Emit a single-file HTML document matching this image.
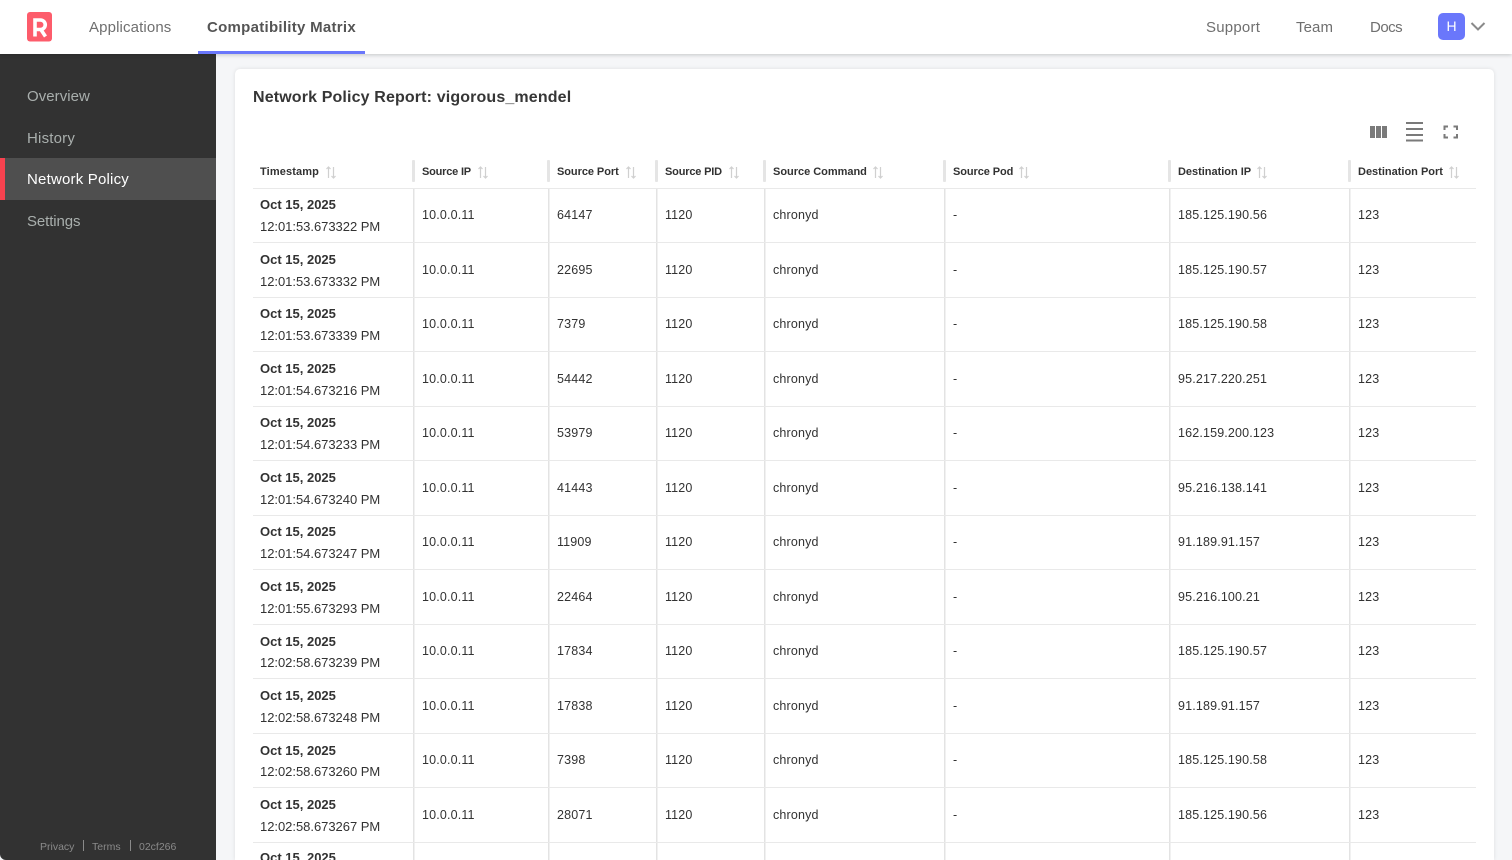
<!DOCTYPE html>
<html><head><meta charset="utf-8">
<style>
*{box-sizing:border-box}
html,body{margin:0;padding:0;width:1512px;height:860px;overflow:hidden;background:#f5f6f8;font-family:"Liberation Sans",sans-serif}
#root{position:relative;width:1512px;height:860px;overflow:hidden;background:#f5f6f8}
.a{position:absolute;white-space:nowrap}
#top{position:absolute;left:0;top:0;width:1512px;height:54px;background:#fff;box-shadow:0 1px 4px rgba(0,0,0,.2);z-index:3}
.nav{font-size:15px;color:#6f6f6f;top:19px;line-height:18px;letter-spacing:.13px}
#side{position:absolute;left:0;top:54px;width:216px;height:806px;background:#323232;border-bottom-left-radius:6px;z-index:2}
.si{font-size:15px;color:#a9afad;left:27px;line-height:18px}
.ft{font-size:10.5px;color:#8a8a8a;top:840px;line-height:14px;letter-spacing:0}
#card{position:absolute;left:235px;top:69px;width:1259px;height:791px;background:#fff;border-radius:5px 5px 0 0;box-shadow:0 0 4px rgba(0,0,0,.1)}
.th{font-size:11px;font-weight:bold;color:#323232;top:166px;line-height:13px}
.td{font-size:12.500px;color:#323232;line-height:15px;letter-spacing:.16px}
.d{font-size:13px;font-weight:bold;color:#323232;left:260px;line-height:15px;letter-spacing:0}
.t{font-size:13px;color:#323232;left:260px;line-height:15px;letter-spacing:-.03px}
.hl{position:absolute;left:253px;width:1223px;height:1px;background:#e9e9e9}
.vl{position:absolute;top:188px;width:1px;height:672px;background:#e3e3e3;box-shadow:1px 0 0 #f1f1f1}
.sp{position:absolute;top:160px;width:3px;height:22px;border-radius:1px;background:#e5e5e5}
</style></head><body><div id="root">
<div id="top">
<svg class="a" style="left:27px;top:12px" width="26" height="30" viewBox="0 0 26 30"><rect width="25" height="29.500" rx="3" fill="#fd5c6b"/><path d="M8 24.500V8h5.500a4.500 4.500 0 0 1 0 9.500H8M13.500 17l5 7.500" fill="none" stroke="#fff" stroke-width="3.600"/></svg>
<div class="a nav" style="left:89px">Applications</div>
<div class="a nav" style="left:207px;font-weight:bold;letter-spacing:.28px;color:#555">Compatibility Matrix</div>
<div class="a" style="left:198px;top:51px;width:167px;height:3px;background:#6a77fb"></div>
<div class="a nav" style="left:1206px;letter-spacing:.22px">Support</div>
<div class="a nav" style="left:1296px;letter-spacing:.1px">Team</div>
<div class="a nav" style="left:1370px;letter-spacing:-.5px">Docs</div>
<div class="a" style="left:1438px;top:13px;width:27px;height:27px;border-radius:5px;background:#6a77fb;color:#fff;font-size:14px;line-height:27px;text-align:center">H</div>
<svg class="a" style="left:1470px;top:21px" width="16" height="11" viewBox="0 0 16 11"><path d="M1.500 2l6.500 6.500L14.500 2" fill="none" stroke="#8a8a8a" stroke-width="2"/></svg>
</div>
<div id="side"></div>
<div style="position:absolute;left:0;top:158px;width:216px;height:42px;background:#4f4f4f;border-left:5px solid #f7424f;z-index:2"></div>
<div style="position:absolute;left:0;top:0;z-index:3">
<div class="a si" style="top:88px;letter-spacing:.05px">Overview</div>
<div class="a si" style="top:130px;letter-spacing:.2px">History</div>
<div class="a si" style="top:171px;color:#fff;letter-spacing:.2px">Network Policy</div>
<div class="a si" style="top:213px;letter-spacing:-.1px">Settings</div>
<div class="a ft" style="left:40px">Privacy</div>
<div class="a" style="left:83px;top:840px;width:1px;height:11px;background:#8a8a8a"></div>
<div class="a ft" style="left:92px">Terms</div>
<div class="a" style="left:130px;top:840px;width:1px;height:11px;background:#8a8a8a"></div>
<div class="a ft" style="left:139px">02cf266</div>
</div>
<div id="card"></div>
<div class="a" style="left:253px;top:88px;font-size:16px;font-weight:bold;color:#363636;line-height:20px;letter-spacing:.14px">Network Policy Report: vigorous_mendel</div>
<svg class="a" style="left:1370px;top:120px" width="90" height="24" viewBox="0 0 90 24" fill="#7a7a7a"><rect x="0" y="6" width="5" height="12"/><rect x="6" y="6" width="5" height="12"/><rect x="12" y="6" width="5" height="12"/><rect x="36" y="2" width="17" height="2"/><rect x="36" y="8" width="17" height="2"/><rect x="36" y="14" width="17" height="2"/><rect x="36" y="19.500" width="17" height="2"/><path d="M74.500 10V6.500h3.500M83.500 6.500H87V10M87 14v3.500h-3.500M78 17.500h-3.500V14" fill="none" stroke="#7a7a7a" stroke-width="2"/></svg>
<div class="a th" style="left:260px;letter-spacing:.12px">Timestamp</div>
<div class="a th" style="left:422px;letter-spacing:-.2px">Source IP</div>
<div class="a th" style="left:557px;letter-spacing:-.06px">Source Port</div>
<div class="a th" style="left:665px;letter-spacing:-.18px">Source PID</div>
<div class="a th" style="left:773px;letter-spacing:-.02px">Source Command</div>
<div class="a th" style="left:953px;letter-spacing:-.08px">Source Pod</div>
<div class="a th" style="left:1178px;letter-spacing:-.02px">Destination IP</div>
<div class="a th" style="left:1358px">Destination Port</div>
<svg class="a" style="left:0;top:0;z-index:1" width="1512" height="200" fill="none" stroke="#d0d0d0" stroke-width="1.200">
<path d="M328.500 178V167M326.500 169l2-2 2 2M333.500 167v11M331.500 176l2 2 2-2"/>
<path d="M480.500 178V167M478.500 169l2-2 2 2M485.500 167v11M483.500 176l2 2 2-2"/>
<path d="M628.500 178V167M626.500 169l2-2 2 2M633.500 167v11M631.500 176l2 2 2-2"/>
<path d="M731.500 178V167M729.500 169l2-2 2 2M736.500 167v11M734.500 176l2 2 2-2"/>
<path d="M875.500 178V167M873.500 169l2-2 2 2M880.500 167v11M878.500 176l2 2 2-2"/>
<path d="M1021.500 178V167M1019.500 169l2-2 2 2M1026.500 167v11M1024.500 176l2 2 2-2"/>
<path d="M1259.500 178V167M1257.500 169l2-2 2 2M1264.500 167v11M1262.500 176l2 2 2-2"/>
<path d="M1451.500 178V167M1449.500 169l2-2 2 2M1456.500 167v11M1454.500 176l2 2 2-2"/>
</svg>
<div class="sp" style="left:412px"></div><div class="sp" style="left:547px"></div><div class="sp" style="left:655px"></div><div class="sp" style="left:763px"></div><div class="sp" style="left:943px"></div><div class="sp" style="left:1168px"></div><div class="sp" style="left:1348px"></div>
<div class="vl" style="left:413px"></div><div class="vl" style="left:548px"></div><div class="vl" style="left:656px"></div><div class="vl" style="left:764px"></div><div class="vl" style="left:944px"></div><div class="vl" style="left:1169px"></div><div class="vl" style="left:1349px"></div>
<div class="hl" style="top:188px"></div><div class="hl" style="top:242px"></div><div class="hl" style="top:297px"></div><div class="hl" style="top:351px"></div><div class="hl" style="top:406px"></div><div class="hl" style="top:460px"></div><div class="hl" style="top:515px"></div><div class="hl" style="top:569px"></div><div class="hl" style="top:624px"></div><div class="hl" style="top:678px"></div><div class="hl" style="top:733px"></div><div class="hl" style="top:787px"></div><div class="hl" style="top:842px"></div>

<div class="a d" style="top:197px">Oct 15, 2025</div><div class="a t" style="top:219px">12:01:53.673322 PM</div><div class="a td" style="left:422px;top:208px">10.0.0.11</div><div class="a td" style="left:557px;top:208px">64147</div><div class="a td" style="left:665px;top:208px">1120</div><div class="a td" style="left:773px;top:208px">chronyd</div><div class="a td" style="left:953px;top:208px">-</div><div class="a td" style="left:1178px;top:208px">185.125.190.56</div><div class="a td" style="left:1358px;top:208px">123</div>
<div class="a d" style="top:252px">Oct 15, 2025</div><div class="a t" style="top:274px">12:01:53.673332 PM</div><div class="a td" style="left:422px;top:263px">10.0.0.11</div><div class="a td" style="left:557px;top:263px">22695</div><div class="a td" style="left:665px;top:263px">1120</div><div class="a td" style="left:773px;top:263px">chronyd</div><div class="a td" style="left:953px;top:263px">-</div><div class="a td" style="left:1178px;top:263px">185.125.190.57</div><div class="a td" style="left:1358px;top:263px">123</div>
<div class="a d" style="top:306px">Oct 15, 2025</div><div class="a t" style="top:328px">12:01:53.673339 PM</div><div class="a td" style="left:422px;top:317px">10.0.0.11</div><div class="a td" style="left:557px;top:317px">7379</div><div class="a td" style="left:665px;top:317px">1120</div><div class="a td" style="left:773px;top:317px">chronyd</div><div class="a td" style="left:953px;top:317px">-</div><div class="a td" style="left:1178px;top:317px">185.125.190.58</div><div class="a td" style="left:1358px;top:317px">123</div>
<div class="a d" style="top:361px">Oct 15, 2025</div><div class="a t" style="top:383px">12:01:54.673216 PM</div><div class="a td" style="left:422px;top:372px">10.0.0.11</div><div class="a td" style="left:557px;top:372px">54442</div><div class="a td" style="left:665px;top:372px">1120</div><div class="a td" style="left:773px;top:372px">chronyd</div><div class="a td" style="left:953px;top:372px">-</div><div class="a td" style="left:1178px;top:372px">95.217.220.251</div><div class="a td" style="left:1358px;top:372px">123</div>
<div class="a d" style="top:415px">Oct 15, 2025</div><div class="a t" style="top:437px">12:01:54.673233 PM</div><div class="a td" style="left:422px;top:426px">10.0.0.11</div><div class="a td" style="left:557px;top:426px">53979</div><div class="a td" style="left:665px;top:426px">1120</div><div class="a td" style="left:773px;top:426px">chronyd</div><div class="a td" style="left:953px;top:426px">-</div><div class="a td" style="left:1178px;top:426px">162.159.200.123</div><div class="a td" style="left:1358px;top:426px">123</div>
<div class="a d" style="top:470px">Oct 15, 2025</div><div class="a t" style="top:492px">12:01:54.673240 PM</div><div class="a td" style="left:422px;top:481px">10.0.0.11</div><div class="a td" style="left:557px;top:481px">41443</div><div class="a td" style="left:665px;top:481px">1120</div><div class="a td" style="left:773px;top:481px">chronyd</div><div class="a td" style="left:953px;top:481px">-</div><div class="a td" style="left:1178px;top:481px">95.216.138.141</div><div class="a td" style="left:1358px;top:481px">123</div>
<div class="a d" style="top:524px">Oct 15, 2025</div><div class="a t" style="top:546px">12:01:54.673247 PM</div><div class="a td" style="left:422px;top:535px">10.0.0.11</div><div class="a td" style="left:557px;top:535px">11909</div><div class="a td" style="left:665px;top:535px">1120</div><div class="a td" style="left:773px;top:535px">chronyd</div><div class="a td" style="left:953px;top:535px">-</div><div class="a td" style="left:1178px;top:535px">91.189.91.157</div><div class="a td" style="left:1358px;top:535px">123</div>
<div class="a d" style="top:579px">Oct 15, 2025</div><div class="a t" style="top:601px">12:01:55.673293 PM</div><div class="a td" style="left:422px;top:590px">10.0.0.11</div><div class="a td" style="left:557px;top:590px">22464</div><div class="a td" style="left:665px;top:590px">1120</div><div class="a td" style="left:773px;top:590px">chronyd</div><div class="a td" style="left:953px;top:590px">-</div><div class="a td" style="left:1178px;top:590px">95.216.100.21</div><div class="a td" style="left:1358px;top:590px">123</div>
<div class="a d" style="top:634px">Oct 15, 2025</div><div class="a t" style="top:655px">12:02:58.673239 PM</div><div class="a td" style="left:422px;top:644px">10.0.0.11</div><div class="a td" style="left:557px;top:644px">17834</div><div class="a td" style="left:665px;top:644px">1120</div><div class="a td" style="left:773px;top:644px">chronyd</div><div class="a td" style="left:953px;top:644px">-</div><div class="a td" style="left:1178px;top:644px">185.125.190.57</div><div class="a td" style="left:1358px;top:644px">123</div>
<div class="a d" style="top:688px">Oct 15, 2025</div><div class="a t" style="top:710px">12:02:58.673248 PM</div><div class="a td" style="left:422px;top:699px">10.0.0.11</div><div class="a td" style="left:557px;top:699px">17838</div><div class="a td" style="left:665px;top:699px">1120</div><div class="a td" style="left:773px;top:699px">chronyd</div><div class="a td" style="left:953px;top:699px">-</div><div class="a td" style="left:1178px;top:699px">91.189.91.157</div><div class="a td" style="left:1358px;top:699px">123</div>
<div class="a d" style="top:743px">Oct 15, 2025</div><div class="a t" style="top:764px">12:02:58.673260 PM</div><div class="a td" style="left:422px;top:753px">10.0.0.11</div><div class="a td" style="left:557px;top:753px">7398</div><div class="a td" style="left:665px;top:753px">1120</div><div class="a td" style="left:773px;top:753px">chronyd</div><div class="a td" style="left:953px;top:753px">-</div><div class="a td" style="left:1178px;top:753px">185.125.190.58</div><div class="a td" style="left:1358px;top:753px">123</div>
<div class="a d" style="top:797px">Oct 15, 2025</div><div class="a t" style="top:819px">12:02:58.673267 PM</div><div class="a td" style="left:422px;top:808px">10.0.0.11</div><div class="a td" style="left:557px;top:808px">28071</div><div class="a td" style="left:665px;top:808px">1120</div><div class="a td" style="left:773px;top:808px">chronyd</div><div class="a td" style="left:953px;top:808px">-</div><div class="a td" style="left:1178px;top:808px">185.125.190.56</div><div class="a td" style="left:1358px;top:808px">123</div>
<div class="a d" style="top:850px">Oct 15, 2025</div>
</div></body></html>
